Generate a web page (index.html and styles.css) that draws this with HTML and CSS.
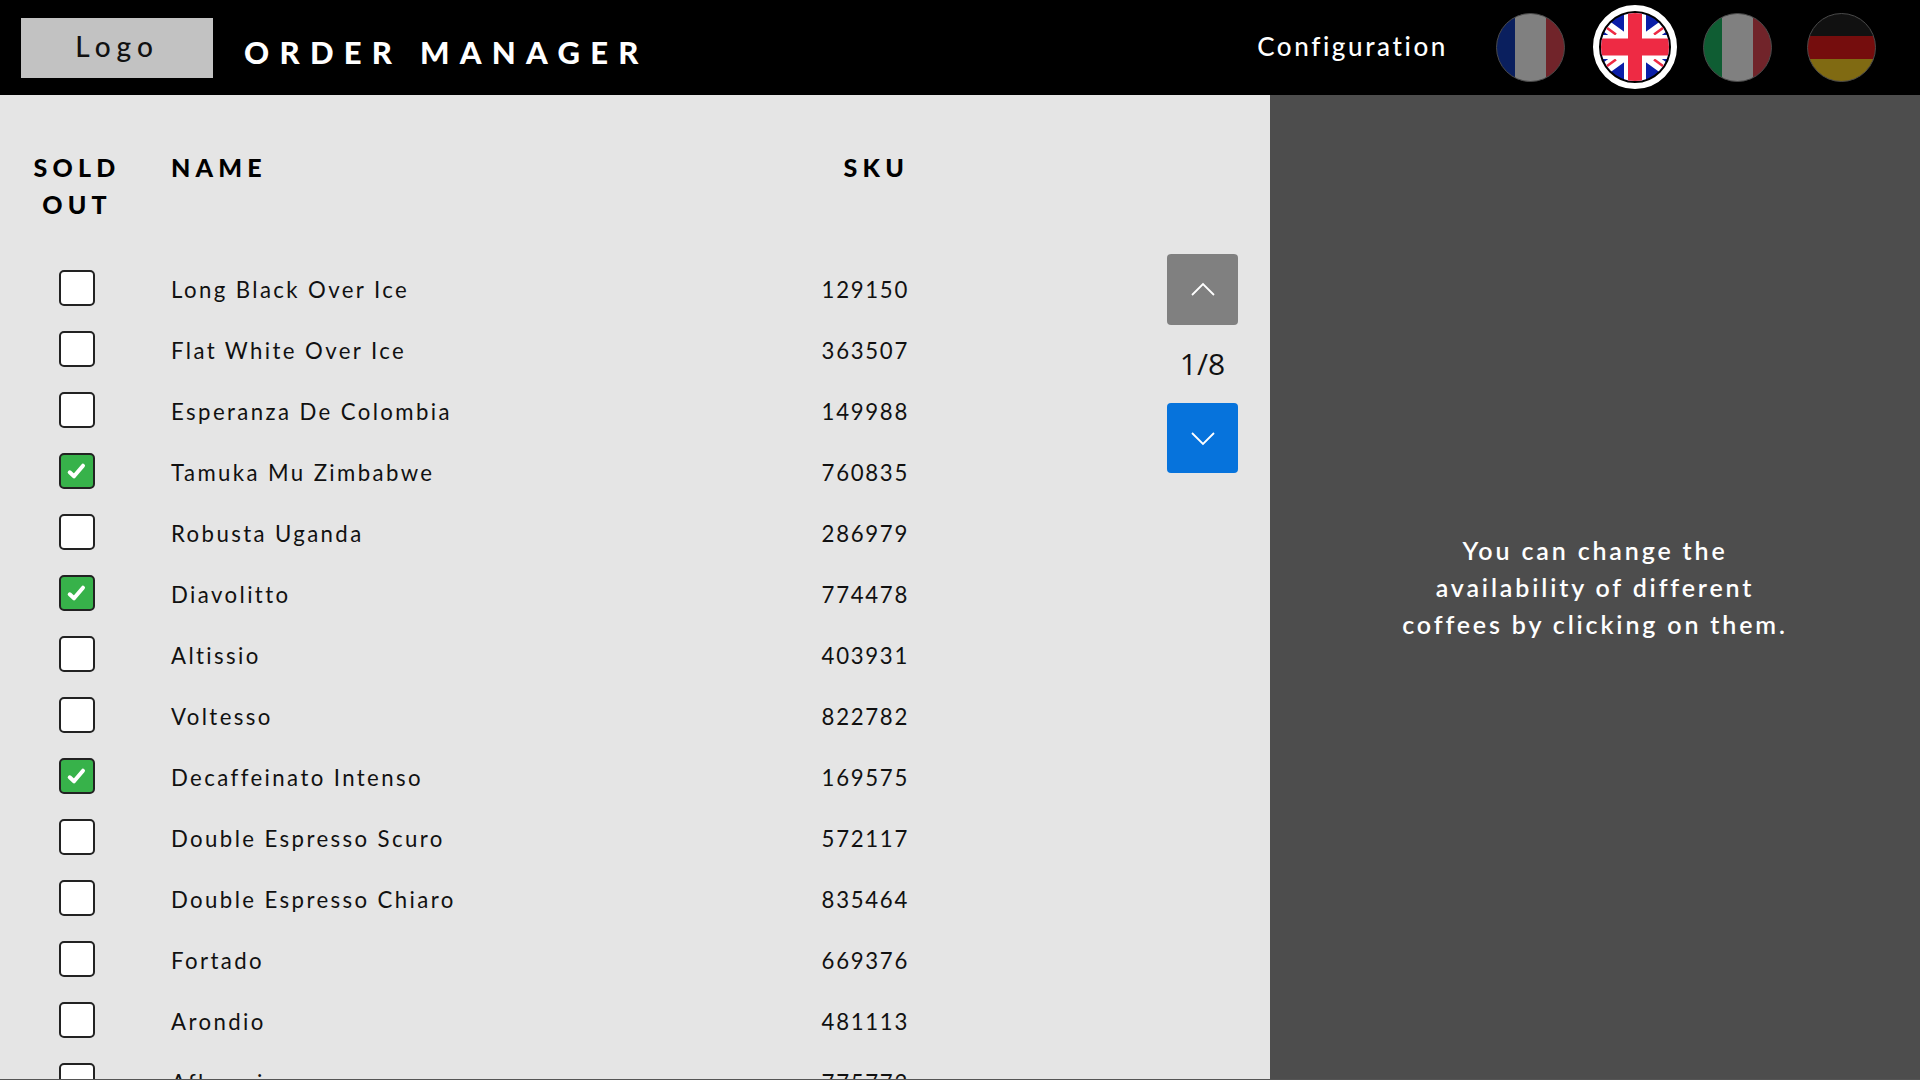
FILE: index.html
```html
<!DOCTYPE html>
<html lang="en">
<head>
<meta charset="utf-8">
<title>Order Manager</title>
<link rel="stylesheet" href="styles.css">
</head>
<body>
<header class="topbar">
  <div class="logo">Logo</div>
  <h1 class="title">ORDER MANAGER</h1>
  <a class="config">Configuration</a>
  <div class="flags">
    <svg class="flag" viewBox="0 0 69 69"><defs><clipPath id="c1"><circle cx="34.5" cy="34.5" r="34"/></clipPath></defs><g clip-path="url(#c1)"><rect width="19" height="69" fill="#0a1f5e"/><rect x="19" width="31" height="69" fill="#808080"/><rect x="50" width="19" height="69" fill="#71242a"/></g><circle cx="34.5" cy="34.5" r="34" fill="none" stroke="#4a4a4a"/></svg>
    <span class="flag-active">
      <svg class="flag-uk" viewBox="0 0 68 68"><defs><clipPath id="c2"><circle cx="34" cy="34" r="34"/></clipPath></defs><g clip-path="url(#c2)"><rect width="68" height="68" fill="#0a1ea8"/><path d="M-6 5L74 63M74 5L-6 63" stroke="#fff" stroke-width="12"/><path d="M4 13.5L15 21.5M64 13.5L53 21.5M4 54.5L15 46.5M64 54.5L53 46.5" stroke="#ee2a44" stroke-width="2.6"/><rect x="23" width="22" height="68" fill="#fff"/><rect y="22" width="68" height="24" fill="#fff"/><rect x="27" width="14" height="68" fill="#ee2a44"/><rect y="25.5" width="68" height="17" fill="#ee2a44"/></g></svg>
    </span>
    <svg class="flag" viewBox="0 0 69 69"><defs><clipPath id="c3"><circle cx="34.5" cy="34.5" r="34"/></clipPath></defs><g clip-path="url(#c3)"><rect width="19" height="69" fill="#0f5d33"/><rect x="19" width="31" height="69" fill="#808080"/><rect x="50" width="19" height="69" fill="#71242a"/></g><circle cx="34.5" cy="34.5" r="34" fill="none" stroke="#4a4a4a"/></svg>
    <svg class="flag" viewBox="0 0 69 69"><defs><clipPath id="c4"><circle cx="34.5" cy="34.5" r="34"/></clipPath></defs><g clip-path="url(#c4)"><rect width="69" height="23" fill="#111"/><rect y="23" width="69" height="23" fill="#750d0d"/><rect y="46" width="69" height="23" fill="#806a12"/></g><circle cx="34.5" cy="34.5" r="34" fill="none" stroke="#4a4a4a"/></svg>
  </div>
</header>
<main class="main">
  <section class="list-panel">
    <div class="table">
      <div class="row head">
        <div class="c-sold">SOLD<br>OUT</div>
        <div class="c-name">NAME</div>
        <div class="c-sku">SKU</div>
      </div>
      <div class="row"><span class="box"></span><span class="c-name">Long Black Over Ice</span><span class="c-sku">129150</span></div>
      <div class="row"><span class="box"></span><span class="c-name">Flat White Over Ice</span><span class="c-sku">363507</span></div>
      <div class="row"><span class="box"></span><span class="c-name">Esperanza De Colombia</span><span class="c-sku">149988</span></div>
      <div class="row"><span class="box on"><svg viewBox="0 0 36 36"><path d="M10.7 19.3l4.3 4 9-10.6" fill="none" stroke="#fff" stroke-width="4" stroke-linecap="round" stroke-linejoin="round"/></svg></span><span class="c-name">Tamuka Mu Zimbabwe</span><span class="c-sku">760835</span></div>
      <div class="row"><span class="box"></span><span class="c-name">Robusta Uganda</span><span class="c-sku">286979</span></div>
      <div class="row"><span class="box on"><svg viewBox="0 0 36 36"><path d="M10.7 19.3l4.3 4 9-10.6" fill="none" stroke="#fff" stroke-width="4" stroke-linecap="round" stroke-linejoin="round"/></svg></span><span class="c-name">Diavolitto</span><span class="c-sku">774478</span></div>
      <div class="row"><span class="box"></span><span class="c-name">Altissio</span><span class="c-sku">403931</span></div>
      <div class="row"><span class="box"></span><span class="c-name">Voltesso</span><span class="c-sku">822782</span></div>
      <div class="row"><span class="box on"><svg viewBox="0 0 36 36"><path d="M10.7 19.3l4.3 4 9-10.6" fill="none" stroke="#fff" stroke-width="4" stroke-linecap="round" stroke-linejoin="round"/></svg></span><span class="c-name">Decaffeinato Intenso</span><span class="c-sku">169575</span></div>
      <div class="row"><span class="box"></span><span class="c-name">Double Espresso Scuro</span><span class="c-sku">572117</span></div>
      <div class="row"><span class="box"></span><span class="c-name">Double Espresso Chiaro</span><span class="c-sku">835464</span></div>
      <div class="row"><span class="box"></span><span class="c-name">Fortado</span><span class="c-sku">669376</span></div>
      <div class="row"><span class="box"></span><span class="c-name">Arondio</span><span class="c-sku">481113</span></div>
      <div class="row"><span class="box"></span><span class="c-name">Aflorazio</span><span class="c-sku">775772</span></div>
    </div>
    <div class="pager">
      <button class="page-btn up"><svg viewBox="0 0 24 14" class="chev"><path d="M1 13L12 2l11 11" fill="none" stroke="#fff" stroke-width="1.8"/></svg></button>
      <div class="page-num">1/8</div>
      <button class="page-btn down"><svg viewBox="0 0 24 14" class="chev"><path d="M1 1l11 11L23 1" fill="none" stroke="#fff" stroke-width="1.8"/></svg></button>
    </div>
  </section>
  <aside class="info">
    <p class="info-text">You can change the<br>availability of different<br>coffees by clicking on them.</p>
  </aside>
</main>
</body>
</html>
```
FILE: styles.css
```css
* { box-sizing: border-box; }
html, body { margin: 0; height: 100%; overflow: hidden; }
body { font-family: "Lato", "Open Sans", sans-serif; background: #e5e5e5; color: #111; height: 1080px; display: flex; flex-direction: column; }

.topbar { height: 95px; background: #000; color: #fff; display: flex; align-items: flex-start; padding-left: 21px; flex: none; }
.logo { width: 192px; height: 60px; margin-top: 18px; padding-bottom: 4px; background: #c2c2c2; color: #111; font-size: 28px; font-weight: 500; letter-spacing: 6px; display: flex; align-items: center; justify-content: center; }
.title { margin: 33px 0 0 31px; font-size: 31px; line-height: 38px; font-weight: 900; letter-spacing: 10.3px; color: #fff; }
.config { margin: 30px 0 0 auto; font-size: 26px; line-height: 32px; font-weight: 500; letter-spacing: 2.6px; }
.flags { display: flex; align-items: flex-start; margin-left: 48px; width: 424px; padding-top: 13px; flex: none; }
.flag { width: 69px; height: 69px; display: block; flex: none; }
.flag-active { width: 84px; height: 84px; margin: -8px 26px 0 28px; border-radius: 50%; background: #000; border: 6px solid #fff; padding: 2px; flex: none; display: block; }
.flag-uk { width: 68px; height: 68px; display: block; margin: 0; }
.flags .flag:last-child { margin-left: 35px; }

.main { flex: 1; display: flex; min-height: 0; height: 985px; border-bottom: 1.5px solid #555; }
.list-panel { width: 1270px; flex: none; overflow: hidden; display: flex; align-items: flex-start; }
.table { width: 1167px; flex: none; }
.row { display: grid; grid-template-columns: 150px 1fr 150px; height: 61px; align-items: center; padding: 0 258px 0 21px; font-size: 22.2px; letter-spacing: 2.4px; }
.row > .c-name, .row > .c-sku { margin-top: 4px; }
.row .box { justify-self: start; margin-left: 38px; }
.head { height: 162px; align-items: start; font-weight: 900; font-size: 25px; line-height: 37px; letter-spacing: 5.2px; color: #000; }
.c-sold { text-align: center; padding-top: 54px; width: 112px; }
.row.head > .c-name, .row.head > .c-sku { margin-top: 0; padding-top: 54px; }
.row.head > .c-sku { letter-spacing: 5.2px; }
.c-name { white-space: nowrap; }
.c-sku { text-align: right; letter-spacing: 1.7px; }
.box { display: block; width: 36px; height: 36px; border: 2px solid #222; border-radius: 5px; background: #fff; }
.box.on { background: #37b24a; }
.box svg { display: block; width: 36px; height: 36px; margin: -2px; }

.pager { width: 71px; margin-top: 159px; display: flex; flex-direction: column; align-items: center; }
.page-btn { width: 71px; height: 70px; border: 0; border-radius: 4px; padding: 0; display: flex; align-items: center; justify-content: center; }
.up { background: #808080; height: 71px; padding-bottom: 2px; }
.down { background: #0673dc; padding-top: 2px; }
.chev { width: 24px; height: 14px; display: block; }
.page-num { font-family: "Open Sans", sans-serif; font-size: 30px; height: 78px; line-height: 78px; color: #111; }

.info { flex: 1; background: #4d4d4d; display: flex; align-items: center; justify-content: center; }
.info-text { margin: 0; color: #fff; font-size: 25px; line-height: 37px; letter-spacing: 2.85px; text-align: center; font-weight: 600; }
```
